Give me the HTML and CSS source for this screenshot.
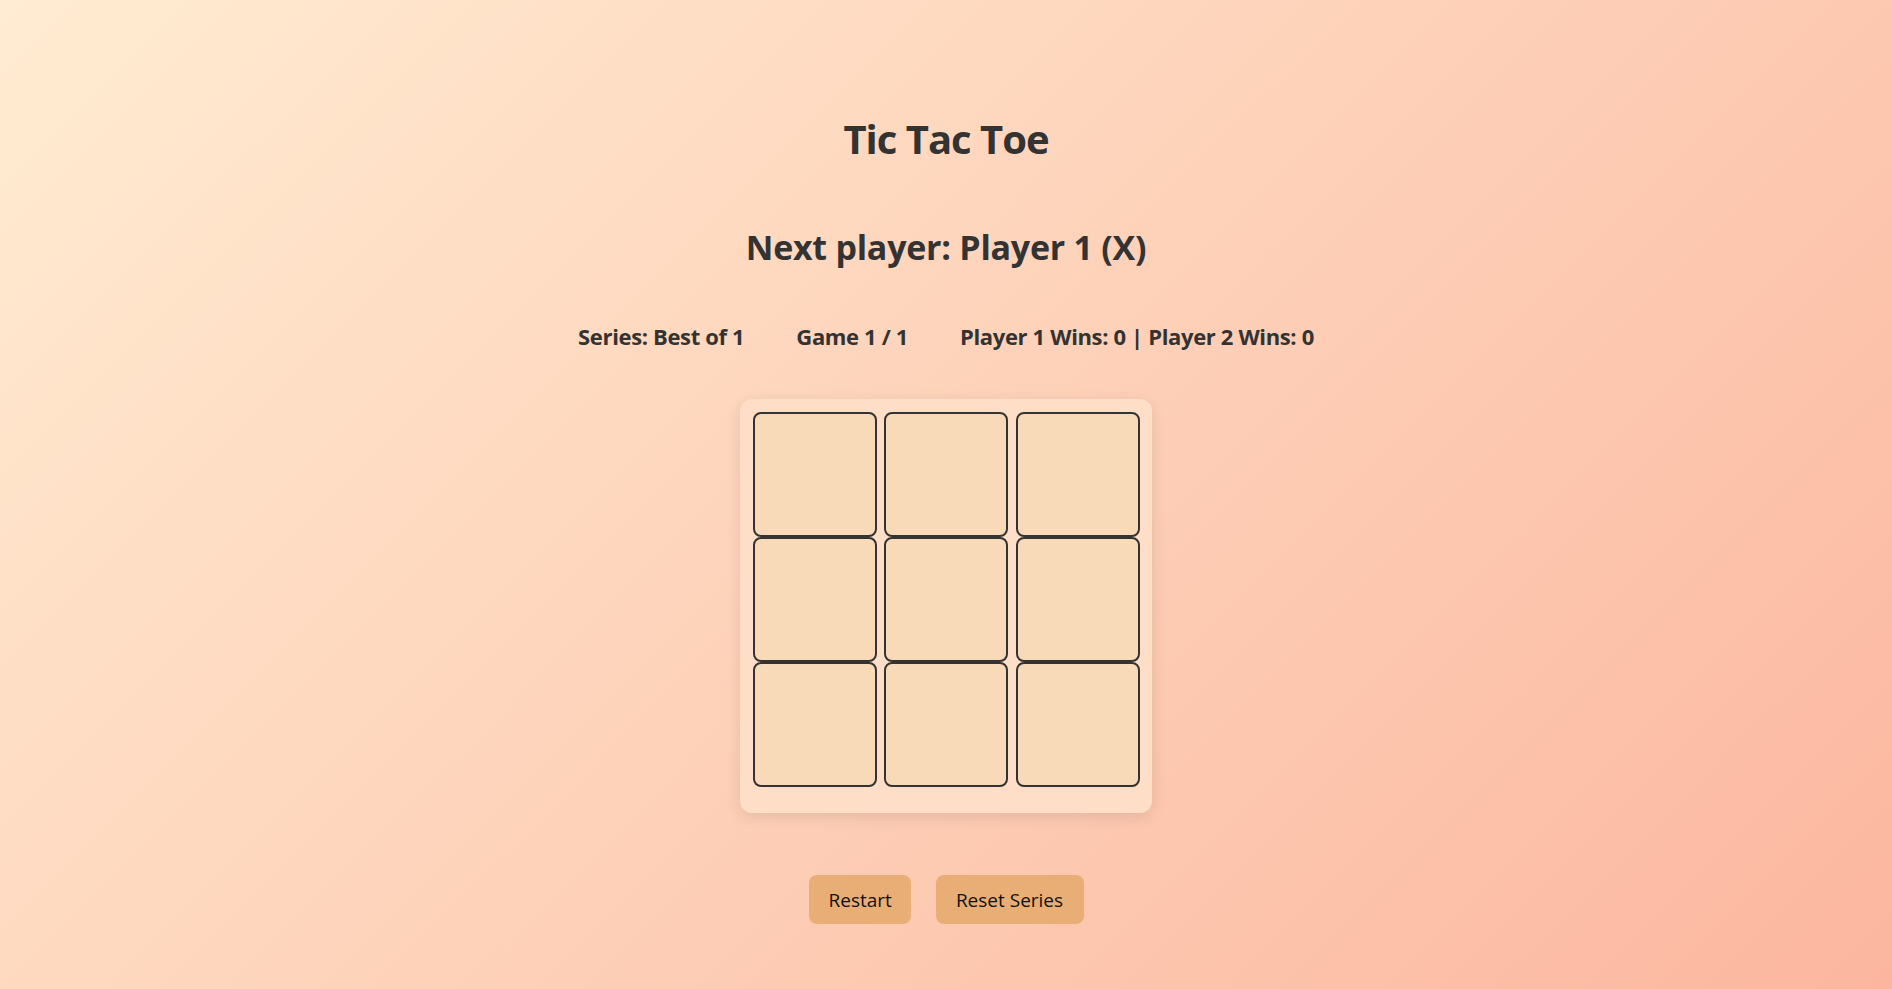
FILE: index.html
```html
<!DOCTYPE html>
<html lang="en">
<head>
<meta charset="utf-8">
<title>Tic Tac Toe</title>
<link rel="stylesheet" href="styles.css">
</head>
<body>
<main class="game">
  <h1 class="title">Tic Tac Toe</h1>
  <h2 class="status">Next player: Player 1 (X)</h2>
  <div class="series">
    <span>Series: Best of 1</span>
    <span>Game 1 / 1</span>
    <span>Player 1 Wins: 0 | Player 2 Wins: 0</span>
  </div>
  <div class="board">
    <div class="row">
      <button class="square"></button>
      <button class="square"></button>
      <button class="square"></button>
    </div>
    <div class="row">
      <button class="square"></button>
      <button class="square"></button>
      <button class="square"></button>
    </div>
    <div class="row">
      <button class="square"></button>
      <button class="square"></button>
      <button class="square"></button>
    </div>
  </div>
  <div class="controls">
    <button class="btn btn-restart">Restart</button>
    <button class="btn btn-reset">Reset Series</button>
  </div>
</main>
</body>
</html>
```
FILE: styles.css
```css
html, body {
  margin: 0;
  padding: 0;
  min-height: 100vh;
}
body {
  background: linear-gradient(135deg, #ffecd2 0%, #fcb69f 100%);
  font-family: "Open Sans", "Noto Sans", sans-serif;
  color: #333;
}
.game {
  display: flex;
  flex-direction: column;
  align-items: center;
  padding-top: 115px;
}
.title {
  margin: 0;
  font-size: 40px;
  line-height: 48px;
  font-weight: 700;
  letter-spacing: -1px;
}
.status {
  margin: 64px 0 0;
  font-size: 34px;
  line-height: 40px;
  font-weight: 700;
  letter-spacing: -0.25px;
}
.series {
  margin-top: 54.5px;
  display: flex;
  gap: 52px;
  font-size: 22px;
  line-height: 28px;
  font-weight: 700;
  letter-spacing: -0.35px;
}
.board {
  margin-top: 49.5px;
  display: flex;
  flex-direction: column;
  padding: 13px 12.5px 26px;
  background: #fedec6;
  border-radius: 12px;
  box-shadow: 0 4px 15px rgba(0, 0, 0, 0.1);
}
.row {
  display: flex;
  gap: 7.5px;
}
.square {
  width: 124px;
  height: 125px;
  box-sizing: border-box;
  border: 2px solid #333;
  border-radius: 8px;
  background: #f9dab8;
  padding: 0;
  margin: 0;
}
.controls {
  margin-top: 62px;
  display: flex;
  gap: 25px;
}
.btn {
  height: 49px;
  box-sizing: border-box;
  border: none;
  border-radius: 8px;
  background: #e9ae75;
  color: #111;
  font-family: "Open Sans", "Noto Sans", sans-serif;
  font-size: 19px;
  padding: 0 20px;
}
.btn-restart { width: 102px; }
.btn-reset { width: 148px; }
```
